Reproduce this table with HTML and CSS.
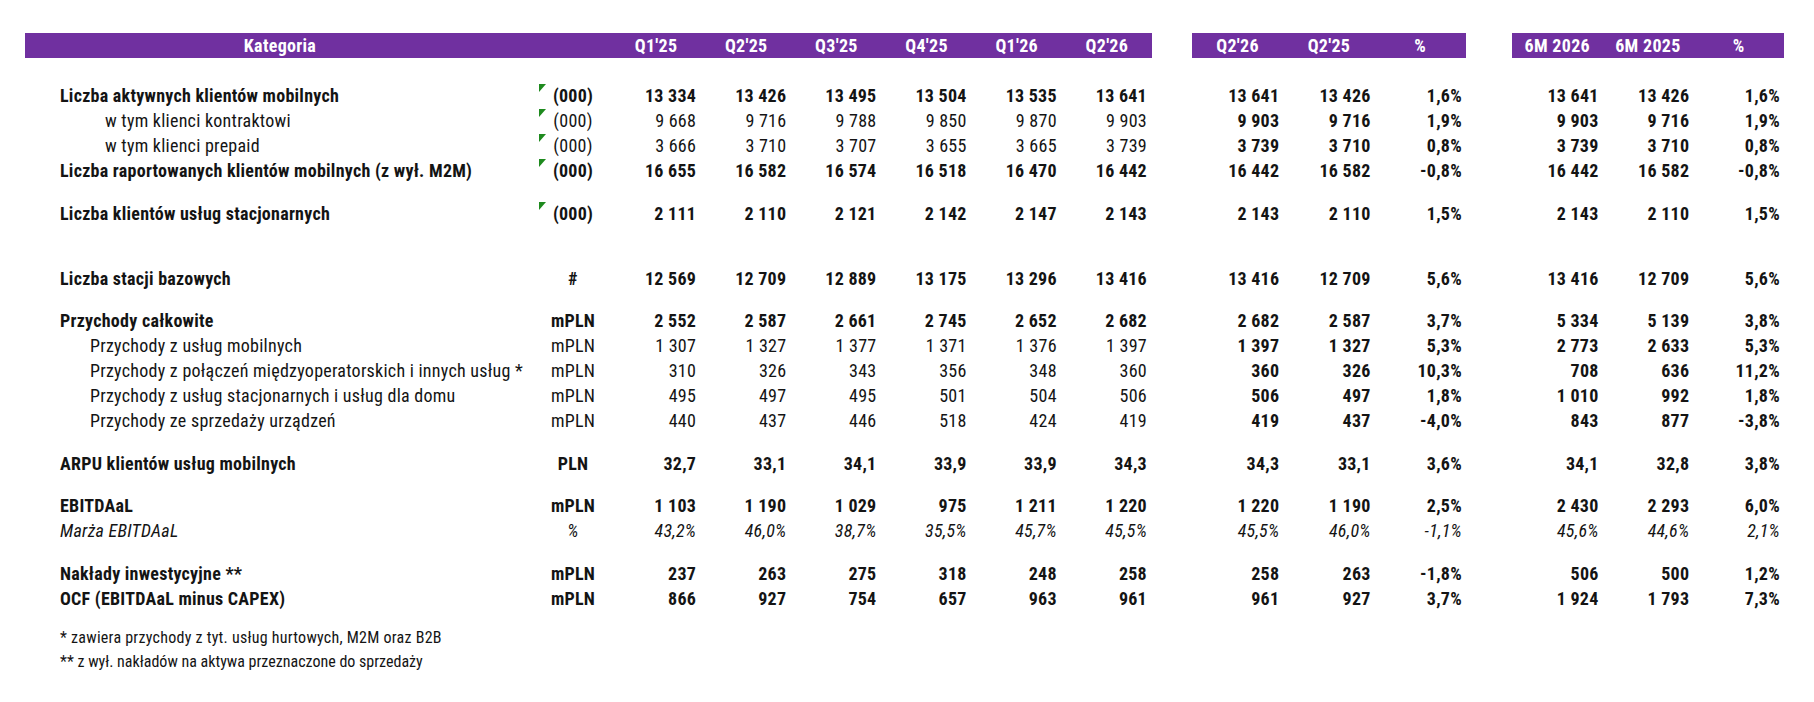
FILE: index.html
```html
<!DOCTYPE html>
<html lang="pl">
<head>
<meta charset="utf-8">
<title>Wyniki operacyjne</title>
<link rel="stylesheet" href="styles.css">
</head>
<body>
<div class="sheet">
  <div class="row head">
    <div class="hc hlabel">Kategoria</div>
    <div class="hc"></div>
    <div class="hc">Q1'25</div>
    <div class="hc">Q2'25</div>
    <div class="hc">Q3'25</div>
    <div class="hc">Q4'25</div>
    <div class="hc">Q1'26</div>
    <div class="hc">Q2'26</div>
    <div class="gap"></div>
    <div class="hc">Q2'26</div>
    <div class="hc">Q2'25</div>
    <div class="hc">%</div>
    <div class="gap"></div>
    <div class="hc">6M 2026</div>
    <div class="hc">6M 2025</div>
    <div class="hc">%</div>
  </div>

  <div class="sp-top"></div>

  <div class="row b">
    <div class="lbl">Liczba aktywnych klientów mobilnych</div>
    <div class="unit flag">(000)</div>
    <div class="q">13 334</div><div class="q">13 426</div><div class="q">13 495</div><div class="q">13 504</div><div class="q">13 535</div><div class="q">13 641</div>
    <div class="gap"></div>
    <div class="c">13 641</div><div class="c">13 426</div><div class="c">1,6%</div>
    <div class="gap"></div>
    <div class="m">13 641</div><div class="m">13 426</div><div class="m">1,6%</div>
  </div>
  <div class="row">
    <div class="lbl ind2">w tym klienci kontraktowi</div>
    <div class="unit flag">(000)</div>
    <div class="q">9 668</div><div class="q">9 716</div><div class="q">9 788</div><div class="q">9 850</div><div class="q">9 870</div><div class="q">9 903</div>
    <div class="gap"></div>
    <div class="c">9 903</div><div class="c">9 716</div><div class="c">1,9%</div>
    <div class="gap"></div>
    <div class="m">9 903</div><div class="m">9 716</div><div class="m">1,9%</div>
  </div>
  <div class="row">
    <div class="lbl ind2">w tym klienci prepaid</div>
    <div class="unit flag">(000)</div>
    <div class="q">3 666</div><div class="q">3 710</div><div class="q">3 707</div><div class="q">3 655</div><div class="q">3 665</div><div class="q">3 739</div>
    <div class="gap"></div>
    <div class="c">3 739</div><div class="c">3 710</div><div class="c">0,8%</div>
    <div class="gap"></div>
    <div class="m">3 739</div><div class="m">3 710</div><div class="m">0,8%</div>
  </div>
  <div class="row b">
    <div class="lbl">Liczba raportowanych klientów mobilnych (z wył. M2M)</div>
    <div class="unit flag">(000)</div>
    <div class="q">16 655</div><div class="q">16 582</div><div class="q">16 574</div><div class="q">16 518</div><div class="q">16 470</div><div class="q">16 442</div>
    <div class="gap"></div>
    <div class="c">16 442</div><div class="c">16 582</div><div class="c">-0,8%</div>
    <div class="gap"></div>
    <div class="m">16 442</div><div class="m">16 582</div><div class="m">-0,8%</div>
  </div>

  <div class="sp"></div>

  <div class="row b">
    <div class="lbl">Liczba klientów usług stacjonarnych</div>
    <div class="unit flag">(000)</div>
    <div class="q">2 111</div><div class="q">2 110</div><div class="q">2 121</div><div class="q">2 142</div><div class="q">2 147</div><div class="q">2 143</div>
    <div class="gap"></div>
    <div class="c">2 143</div><div class="c">2 110</div><div class="c">1,5%</div>
    <div class="gap"></div>
    <div class="m">2 143</div><div class="m">2 110</div><div class="m">1,5%</div>
  </div>

  <div class="sp-big"></div>

  <div class="row b">
    <div class="lbl">Liczba stacji bazowych</div>
    <div class="unit">#</div>
    <div class="q">12 569</div><div class="q">12 709</div><div class="q">12 889</div><div class="q">13 175</div><div class="q">13 296</div><div class="q">13 416</div>
    <div class="gap"></div>
    <div class="c">13 416</div><div class="c">12 709</div><div class="c">5,6%</div>
    <div class="gap"></div>
    <div class="m">13 416</div><div class="m">12 709</div><div class="m">5,6%</div>
  </div>

  <div class="sp"></div>

  <div class="row b">
    <div class="lbl">Przychody całkowite</div>
    <div class="unit">mPLN</div>
    <div class="q">2 552</div><div class="q">2 587</div><div class="q">2 661</div><div class="q">2 745</div><div class="q">2 652</div><div class="q">2 682</div>
    <div class="gap"></div>
    <div class="c">2 682</div><div class="c">2 587</div><div class="c">3,7%</div>
    <div class="gap"></div>
    <div class="m">5 334</div><div class="m">5 139</div><div class="m">3,8%</div>
  </div>
  <div class="row">
    <div class="lbl ind1">Przychody z usług mobilnych</div>
    <div class="unit">mPLN</div>
    <div class="q">1 307</div><div class="q">1 327</div><div class="q">1 377</div><div class="q">1 371</div><div class="q">1 376</div><div class="q">1 397</div>
    <div class="gap"></div>
    <div class="c">1 397</div><div class="c">1 327</div><div class="c">5,3%</div>
    <div class="gap"></div>
    <div class="m">2 773</div><div class="m">2 633</div><div class="m">5,3%</div>
  </div>
  <div class="row">
    <div class="lbl ind1">Przychody z połączeń międzyoperatorskich i innych usług *</div>
    <div class="unit">mPLN</div>
    <div class="q">310</div><div class="q">326</div><div class="q">343</div><div class="q">356</div><div class="q">348</div><div class="q">360</div>
    <div class="gap"></div>
    <div class="c">360</div><div class="c">326</div><div class="c">10,3%</div>
    <div class="gap"></div>
    <div class="m">708</div><div class="m">636</div><div class="m">11,2%</div>
  </div>
  <div class="row">
    <div class="lbl ind1">Przychody z usług stacjonarnych i usług dla domu</div>
    <div class="unit">mPLN</div>
    <div class="q">495</div><div class="q">497</div><div class="q">495</div><div class="q">501</div><div class="q">504</div><div class="q">506</div>
    <div class="gap"></div>
    <div class="c">506</div><div class="c">497</div><div class="c">1,8%</div>
    <div class="gap"></div>
    <div class="m">1 010</div><div class="m">992</div><div class="m">1,8%</div>
  </div>
  <div class="row">
    <div class="lbl ind1">Przychody ze sprzedaży urządzeń</div>
    <div class="unit">mPLN</div>
    <div class="q">440</div><div class="q">437</div><div class="q">446</div><div class="q">518</div><div class="q">424</div><div class="q">419</div>
    <div class="gap"></div>
    <div class="c">419</div><div class="c">437</div><div class="c">-4,0%</div>
    <div class="gap"></div>
    <div class="m">843</div><div class="m">877</div><div class="m">-3,8%</div>
  </div>

  <div class="sp"></div>

  <div class="row b">
    <div class="lbl">ARPU klientów usług mobilnych</div>
    <div class="unit">PLN</div>
    <div class="q">32,7</div><div class="q">33,1</div><div class="q">34,1</div><div class="q">33,9</div><div class="q">33,9</div><div class="q">34,3</div>
    <div class="gap"></div>
    <div class="c">34,3</div><div class="c">33,1</div><div class="c">3,6%</div>
    <div class="gap"></div>
    <div class="m">34,1</div><div class="m">32,8</div><div class="m">3,8%</div>
  </div>

  <div class="sp"></div>

  <div class="row b">
    <div class="lbl">EBITDAaL</div>
    <div class="unit">mPLN</div>
    <div class="q">1 103</div><div class="q">1 190</div><div class="q">1 029</div><div class="q">975</div><div class="q">1 211</div><div class="q">1 220</div>
    <div class="gap"></div>
    <div class="c">1 220</div><div class="c">1 190</div><div class="c">2,5%</div>
    <div class="gap"></div>
    <div class="m">2 430</div><div class="m">2 293</div><div class="m">6,0%</div>
  </div>
  <div class="row it">
    <div class="lbl">Marża EBITDAaL</div>
    <div class="unit">%</div>
    <div class="q">43,2%</div><div class="q">46,0%</div><div class="q">38,7%</div><div class="q">35,5%</div><div class="q">45,7%</div><div class="q">45,5%</div>
    <div class="gap"></div>
    <div class="c">45,5%</div><div class="c">46,0%</div><div class="c">-1,1%</div>
    <div class="gap"></div>
    <div class="m">45,6%</div><div class="m">44,6%</div><div class="m">2,1%</div>
  </div>

  <div class="sp"></div>

  <div class="row b">
    <div class="lbl">Nakłady inwestycyjne **</div>
    <div class="unit">mPLN</div>
    <div class="q">237</div><div class="q">263</div><div class="q">275</div><div class="q">318</div><div class="q">248</div><div class="q">258</div>
    <div class="gap"></div>
    <div class="c">258</div><div class="c">263</div><div class="c">-1,8%</div>
    <div class="gap"></div>
    <div class="m">506</div><div class="m">500</div><div class="m">1,2%</div>
  </div>
  <div class="row b">
    <div class="lbl">OCF (EBITDAaL minus CAPEX)</div>
    <div class="unit">mPLN</div>
    <div class="q">866</div><div class="q">927</div><div class="q">754</div><div class="q">657</div><div class="q">963</div><div class="q">961</div>
    <div class="gap"></div>
    <div class="c">961</div><div class="c">927</div><div class="c">3,7%</div>
    <div class="gap"></div>
    <div class="m">1 924</div><div class="m">1 793</div><div class="m">7,3%</div>
  </div>

  <div class="notes">
    <p class="note">* zawiera przychody z tyt. usług hurtowych, M2M oraz B2B</p>
    <p class="note note2">** z wył. nakładów na aktywa przeznaczone do sprzedaży</p>
  </div>
</div>
</body>
</html>
```
FILE: styles.css
```css
html, body {
  margin: 0;
  padding: 0;
  background: #ffffff;
}

body {
  font-family: "Roboto Condensed", "Liberation Sans Narrow", "DejaVu Sans Condensed", Roboto, sans-serif;
  font-size: 18px;
  letter-spacing: 0.25px;
  color: #141414;
}

.sheet {
  padding: 33px 0 0 25px;
  width: 1759px;
}

.row {
  display: grid;
  grid-template-columns: 510px 76px repeat(6, 90.17px) 40px repeat(3, 91.33px) 46px repeat(3, 90.67px);
  height: 25px;
  align-items: center;
  white-space: nowrap;
}

.head {
  height: 25px;
  align-items: stretch;
  color: #ffffff;
  font-weight: 700;
  font-size: 18px;
  letter-spacing: 0.3px;
}

.hc {
  background: #7030a0;
  display: flex;
  align-items: center;
  justify-content: center;
}

.gap {
  height: 100%;
}

.sp-top { height: 25px; }
.sp { height: 17.5px; }
.sp-big { height: 40px; }

.lbl {
  padding-left: 35px;
}
.ind1 { padding-left: 65px; }
.ind2 { padding-left: 80px; }

.unit {
  position: relative;
  height: 100%;
  display: flex;
  align-items: center;
  justify-content: center;
}

.flag::before {
  content: "";
  position: absolute;
  left: 4px;
  top: 1px;
  width: 0;
  height: 0;
  border-top: 8px solid #1e8a1e;
  border-right: 7px solid transparent;
}

.q {
  text-align: right;
  padding-right: 5px;
}

.c, .m {
  text-align: right;
  padding-right: 4px;
  font-weight: 700;
}

.b .lbl, .b .unit, .b .q {
  font-weight: 700;
}

.it .lbl, .it .unit, .it .q, .it .c, .it .m {
  font-style: italic;
  font-weight: 400;
}

.notes {
  padding-top: 15px;
  padding-left: 35px;
}

.note {
  margin: 0;
  height: 24px;
  line-height: 24px;
  font-size: 16px;
}

.note2 {
  letter-spacing: 0;
}
```
